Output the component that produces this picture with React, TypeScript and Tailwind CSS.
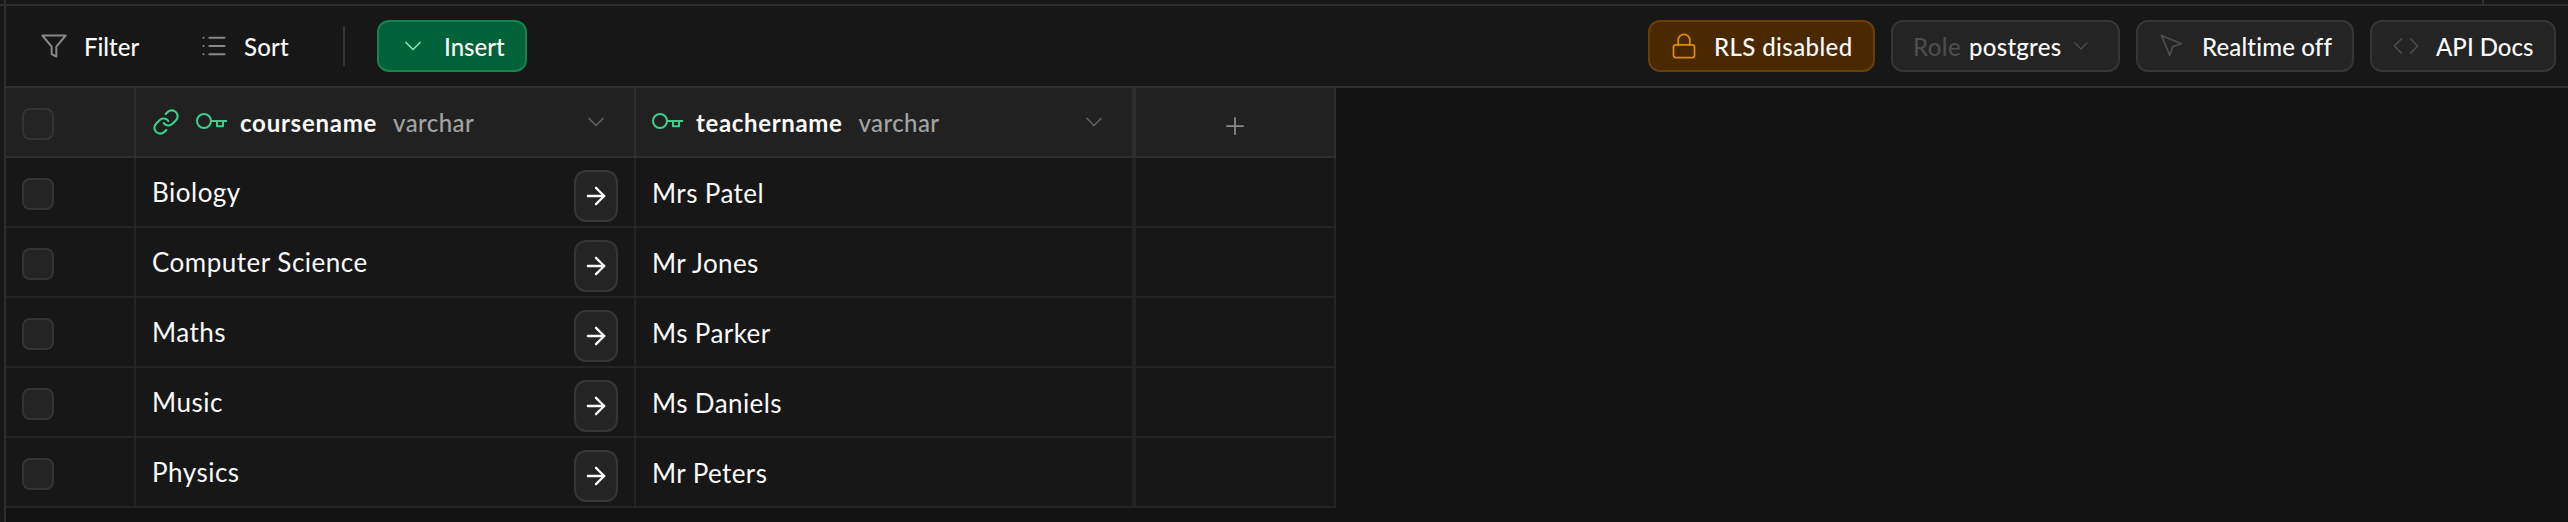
import React from "react";
import { ArrowRight, ChevronDown, Code, Link, List, Lock, Plus } from "lucide-react";

function KeyIcon() {
  return (
    <svg width="32" height="18" viewBox="0 0 32 18" fill="none" stroke="#3ecf8e" strokeWidth="2" strokeLinejoin="round">
      <circle cx="8" cy="8" r="7" />
      <path d="M15 8h16M27 8v5.2h-6V8" />
    </svg>
  );
}

function FilterIcon() {
  return (
    <svg width="28" height="28" viewBox="0 0 24 24" fill="none" stroke="#898989" strokeWidth="1.7" strokeLinecap="round" strokeLinejoin="round">
      <polygon points="22 3 2 3 10 12.46 10 19 14 21 14 12.46 22 3" />
    </svg>
  );
}

function PointerIcon() {
  return (
    <svg width="28" height="28" viewBox="0 0 24 24" fill="none" stroke="#4d4d4d" strokeWidth="1.5" strokeLinecap="round" strokeLinejoin="round">
      <path d="m3 3 7.07 16.97 2.51-7.39 7.39-2.51L3 3z" />
    </svg>
  );
}

function Checkbox() {
  return <span className="ml-4 block size-8 shrink-0 rounded-lg border-2 border-[#343434] bg-[#242424]" />;
}

const grey = "flex h-[52px] shrink-0 items-center rounded-xl border-2 border-[#363636] bg-[#242424]";

const rows = [
  ["Biology", "Mrs Patel"],
  ["Computer Science", "Mr Jones"],
  ["Maths", "Ms Parker"],
  ["Music", "Ms Daniels"],
  ["Physics", "Mr Peters"],
];

export default function App() {
  return (
    <div className="flex h-[522px] w-[2568px] flex-col overflow-hidden bg-[#121212] font-['Lato','Liberation_Sans',sans-serif] text-2xl font-medium text-[#fafafa] [font-variant-ligatures:none]">
      <div className="flex h-1 shrink-0 bg-[#171717]">
        <div className="w-1" />
        <div className="w-0.5 bg-[#2e2e2e]" />
        <div className="w-[2476px]" />
        <div className="w-0.5 bg-[#2e2e2e]" />
      </div>
      <div className="h-0.5 shrink-0 bg-[#2e2e2e]" />
      <div className="flex flex-1">
        <div className="w-1 bg-[#171717]" />
        <div className="w-0.5 bg-[#2e2e2e]" />
        <div className="flex flex-1 flex-col">
          <div className="flex h-[82px] shrink-0 items-center border-b-2 border-[#2e2e2e] bg-[#171717] pr-3 pl-[34px]">
            <FilterIcon />
            <span className="ml-4 w-[116px] pt-0.5">Filter</span>
            <List size={28} strokeWidth={1.7} className="text-[#898989]" />
            <span className="ml-4 w-[99px] pt-0.5 tracking-[0.2px]">Sort</span>
            <div className="h-10 w-0.5 bg-[#363636]" />
            <button className="ml-8 flex h-[52px] w-[150px] items-center rounded-xl border-2 border-[#15834f] bg-[#006239] pl-5">
              <ChevronDown size={28} strokeWidth={1.5} className="text-[#85e0ba]" />
              <span className="ml-[17px] pt-0.5">Insert</span>
            </button>
            <div className="ml-auto flex gap-4">
              <button className="flex h-[52px] w-[227px] items-center rounded-xl border-2 border-[#693f05] bg-[#4a2900] pl-5">
                <Lock size={28} strokeWidth={1.5} className="text-[#db8e00]" />
                <span className="ml-4 pt-0.5 tracking-[0.4px]">RLS disabled</span>
              </button>
              <button className={grey + " w-[229px] pl-5"}>
                <span className="pt-0.5 tracking-[0.4px] text-[#4d4d4d]">Role</span>
                <span className="ml-2 pt-0.5 tracking-[0.25px]">postgres</span>
                <ChevronDown size={24} strokeWidth={1.2} className="ml-2 text-[#4d4d4d]" />
              </button>
              <button className={grey + " w-[218px] pl-5"}>
                <PointerIcon />
                <span className="ml-4 pt-0.5 tracking-[0.15px]">Realtime off</span>
              </button>
              <button className={grey + " w-[186px] pl-5"}>
                <Code size={28} strokeWidth={1.5} className="text-[#4d4d4d]" />
                <span className="ml-4 pt-0.5">API Docs</span>
              </button>
            </div>
          </div>
          <div className="grid w-[1330px] grid-cols-[130px_500px_500px_200px]">
            <div className="flex h-[70px] items-center border-r-2 border-b-2 border-[#2e2e2e] bg-[#212121] pt-1"><Checkbox /></div>
            <div className="flex h-[70px] items-center border-r-2 border-b-2 border-[#2e2e2e] bg-[#212121] pl-4">
              <Link size={28} strokeWidth={1.8} className="text-[#3ecf8e]" />
              <span className="ml-4"><KeyIcon /></span>
              <span className="ml-3 pt-0.5 font-bold tracking-[0.75px]">coursename</span>
              <span className="ml-4 pt-0.5 tracking-[0.4px] text-[#a3a3a3]">varchar</span>
              <ChevronDown size={28} strokeWidth={1.5} className="mr-6 ml-auto text-[#606060]" />
            </div>
            <div className="flex h-[70px] items-center border-r-4 border-b-2 border-[#2e2e2e] bg-[#212121] pl-4">
              <KeyIcon />
              <span className="ml-3 pt-0.5 font-bold tracking-[0.65px]">teachername</span>
              <span className="ml-4 pt-0.5 tracking-[0.4px] text-[#a3a3a3]">varchar</span>
              <ChevronDown size={28} strokeWidth={1.5} className="mr-6 ml-auto text-[#606060]" />
            </div>
            <div className="flex h-[70px] items-center justify-center border-r-2 border-b-2 border-[#2e2e2e] bg-[#212121] pt-2">
              <Plus size={28} strokeWidth={1.5} className="text-[#898989]" />
            </div>
            {rows.map(([course, teacher]) => (
              <React.Fragment key={course}>
                <div className="flex h-[70px] items-center border-r-2 border-b-2 border-[#242424] bg-[#171717] pt-1"><Checkbox /></div>
                <div className="flex h-[70px] items-start justify-between border-r-2 border-b-2 border-[#242424] bg-[#171717] px-4">
                  <span className="text-[26px] leading-[68px] font-normal tracking-[0.5px]">{course}</span>
                  <button className={grey + " mt-3 w-11 justify-center"}><ArrowRight size={28} /></button>
                </div>
                <div className="flex h-[70px] items-center border-r-4 border-b-2 border-[#242424] bg-[#171717] pt-0.5 pl-4 text-[26px] font-normal tracking-[0.4px]">{teacher}</div>
                <div className="h-[70px] border-r-2 border-b-2 border-[#242424] bg-[#171717]" />
              </React.Fragment>
            ))}
          </div>
        </div>
      </div>
    </div>
  );
}
